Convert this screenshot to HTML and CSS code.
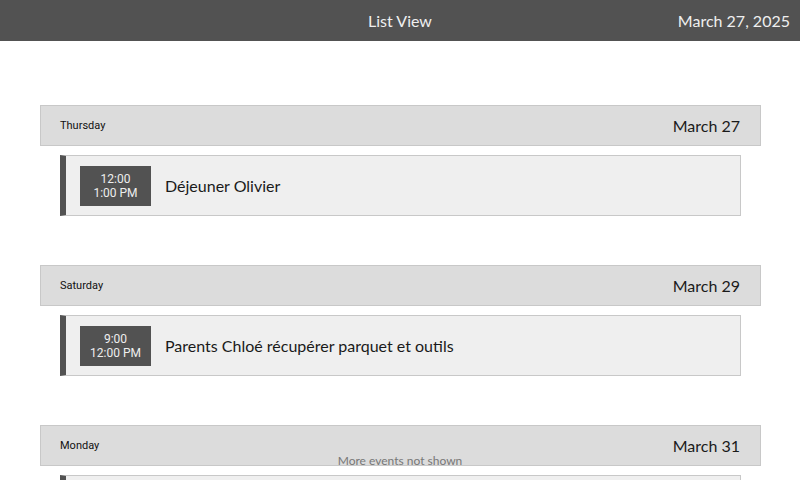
FILE: index.html
```html
<!DOCTYPE html>
<html>
<head>
<meta charset="utf-8">
<link rel="stylesheet" href="styles.css">
</head>
<body>
<div class="topbar">
  <div class="title">List View</div>
  <div class="today">March 27, 2025</div>
</div>
<div class="list">
  <div class="day">
    <div class="day-head"><span class="dow">Thursday</span><span class="date">March 27</span></div>
    <div class="event"><div class="time"><span>12:00</span><span>1:00 PM</span></div><div class="name">Déjeuner Olivier</div></div>
  </div>
  <div class="day">
    <div class="day-head"><span class="dow">Saturday</span><span class="date">March 29</span></div>
    <div class="event"><div class="time"><span>9:00</span><span>12:00 PM</span></div><div class="name">Parents Chloé récupérer parquet et outils</div></div>
  </div>
  <div class="day">
    <div class="day-head"><span class="dow">Monday</span><span class="date">March 31</span></div>
    <div class="event"></div>
  </div>
</div>
<div class="more">More events not shown</div>
</body>
</html>
```
FILE: styles.css
```css
html, body { margin: 0; padding: 0; }
body {
  width: 800px; height: 480px; overflow: hidden; position: relative;
  background: #ffffff;
  font-family: Lato, "Liberation Sans", sans-serif;
  color: #1a1a1a;
}
.topbar {
  height: 41px; background: #525252; color: #efefef;
  display: flex; align-items: center; justify-content: center;
  position: relative; font-size: 16px;
}
.topbar .today { position: absolute; right: 10px; top: 11px; }
.list { padding: 64px 39px 0 40px; }
.day { margin-bottom: 49px; }
.day-head {
  height: 39px; background: #dcdcdc; border: 1px solid #c8c8c8;
  display: flex; align-items: center; justify-content: space-between;
  padding: 0 20px 0 19px;
}
.dow { font-family: Roboto, sans-serif; font-size: 11px; color: #111; }
.date { font-size: 16px; color: #1a1a1a; }
.event {
  margin: 9px 20px 0 20px; height: 59px;
  background: #efefef; border: 1px solid #c8c8c8; border-left: 6px solid #525252;
  display: flex; align-items: center; padding-left: 14px;
}
.time {
  width: 71px; height: 40px; background: #525252; color: #eeeeee;
  display: flex; flex-direction: column; align-items: center; justify-content: center;
  font-family: Roboto, sans-serif; font-size: 12px; line-height: 14px;
}
.name { margin-left: 14px; font-size: 16px; }
.more {
  position: absolute; left: 0; right: 0; top: 453px; text-align: center;
  font-size: 12px; color: #777;
}
```
